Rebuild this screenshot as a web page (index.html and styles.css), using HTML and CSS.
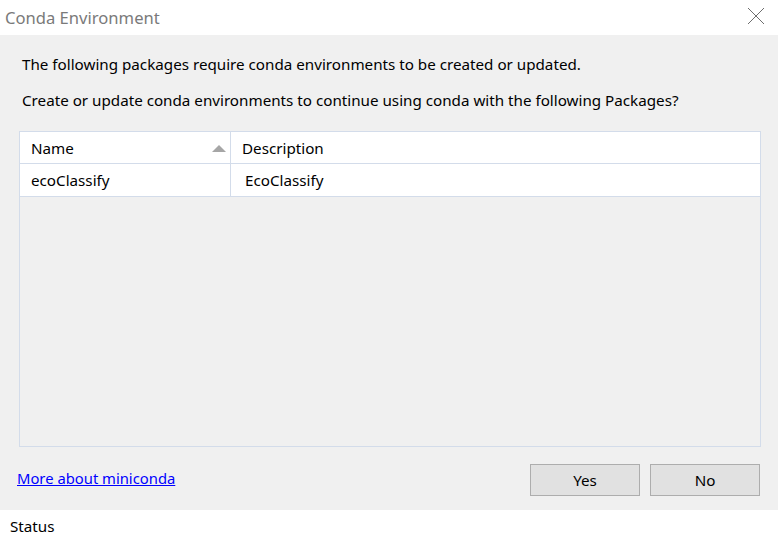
FILE: index.html
```html
<!DOCTYPE html>
<html>
<head>
<meta charset="utf-8">
<link rel="stylesheet" href="styles.css">
</head>
<body>
<div class="window">
  <div class="titlebar">
    <span class="title">Conda Environment</span>
    <svg class="close" width="18" height="18" viewBox="0 0 18 18"><path d="M1 1 L17 17 M17 1 L1 17" stroke="#6e6e6e" stroke-width="1" fill="none"/></svg>
  </div>
  <div class="content">
    <p class="msg msg1">The following packages require conda environments to be created or updated.</p>
    <p class="msg msg2">Create or update conda environments to continue using conda with the following Packages?</p>
    <div class="table">
      <div class="row head">
        <div class="cell c1">Name<span class="sort"></span></div>
        <div class="cell c2">Description</div>
      </div>
      <div class="row">
        <div class="cell c1">ecoClassify</div>
        <div class="cell c2">EcoClassify</div>
      </div>
    </div>
    <div class="footer">
      <a class="link" href="#">More about miniconda</a>
      <div class="buttons">
        <button class="btn">Yes</button>
        <button class="btn">No</button>
      </div>
    </div>
  </div>
  <div class="status">Status</div>
</div>
</body>
</html>
```
FILE: styles.css
```css
html, body {
  margin: 0;
  padding: 0;
  background: #ffffff;
}
body {
  font-family: "Noto Sans", "Open Sans", sans-serif;
  font-size: 15.2px;
  color: #000;
}
.window {
  width: 778px;
  height: 545px;
  display: flex;
  flex-direction: column;
}
.titlebar {
  height: 35px;
  background: #fff;
  display: flex;
  align-items: center;
  justify-content: space-between;
  padding: 0 13px 0 5px;
  box-sizing: border-box;
}
.title {
  font-size: 16.6px;
  color: #7a7a7a;
  margin-top: -1px;
}
.close {
  margin-top: -4px;
}
.content {
  height: 475px;
  background: #f0f0f0;
  padding: 18px 18px 0 18px;
  box-sizing: border-box;
  display: flex;
  flex-direction: column;
}
.msg {
  margin: 0;
  line-height: 22px;
  padding-left: 4px;
}
.msg2 {
  margin-top: 14px;
}
.table {
  margin-top: 20px;
  height: 316px;
  border: 1px solid #d3dcea;
  box-sizing: border-box;
  background: #f0f0f0;
  margin-left: 1px;
  width: 742px;
}
.row {
  display: flex;
  height: 33px;
  background: #fff;
  border-bottom: 1px solid #d3dcea;
  box-sizing: border-box;
}
.row.head {
  height: 32px;
}
.cell {
  display: flex;
  align-items: center;
  box-sizing: border-box;
}
.c1 {
  width: 211px;
  border-right: 1px solid #d3dcea;
  padding-left: 11px;
  position: relative;
}
.c2 {
  flex: 1;
  padding-left: 11px;
}
.row:not(.head) .c2 {
  padding-left: 14px;
}
.sort {
  position: absolute;
  right: 4px;
  top: 13px;
  width: 0;
  height: 0;
  border-left: 7px solid transparent;
  border-right: 7px solid transparent;
  border-bottom: 7px solid #a6a6a6;
}
.footer {
  display: flex;
  justify-content: space-between;
  align-items: center;
  margin-top: 17px;
}
.link {
  color: #0000ff;
  text-decoration: underline;
  margin-left: -1px;
  margin-top: -4px;
  font-size: 14.8px;
}
.buttons {
  display: flex;
  gap: 10px;
  margin-right: 0;
}
.btn {
  width: 110px;
  height: 32px;
  background: #e1e1e1;
  border: 1px solid #adadad;
  font-family: inherit;
  font-size: 15.2px;
  color: #000;
  padding: 0;
}
.status {
  height: 35px;
  background: #fff;
  padding-left: 10px;
  line-height: 33px;
}
```
